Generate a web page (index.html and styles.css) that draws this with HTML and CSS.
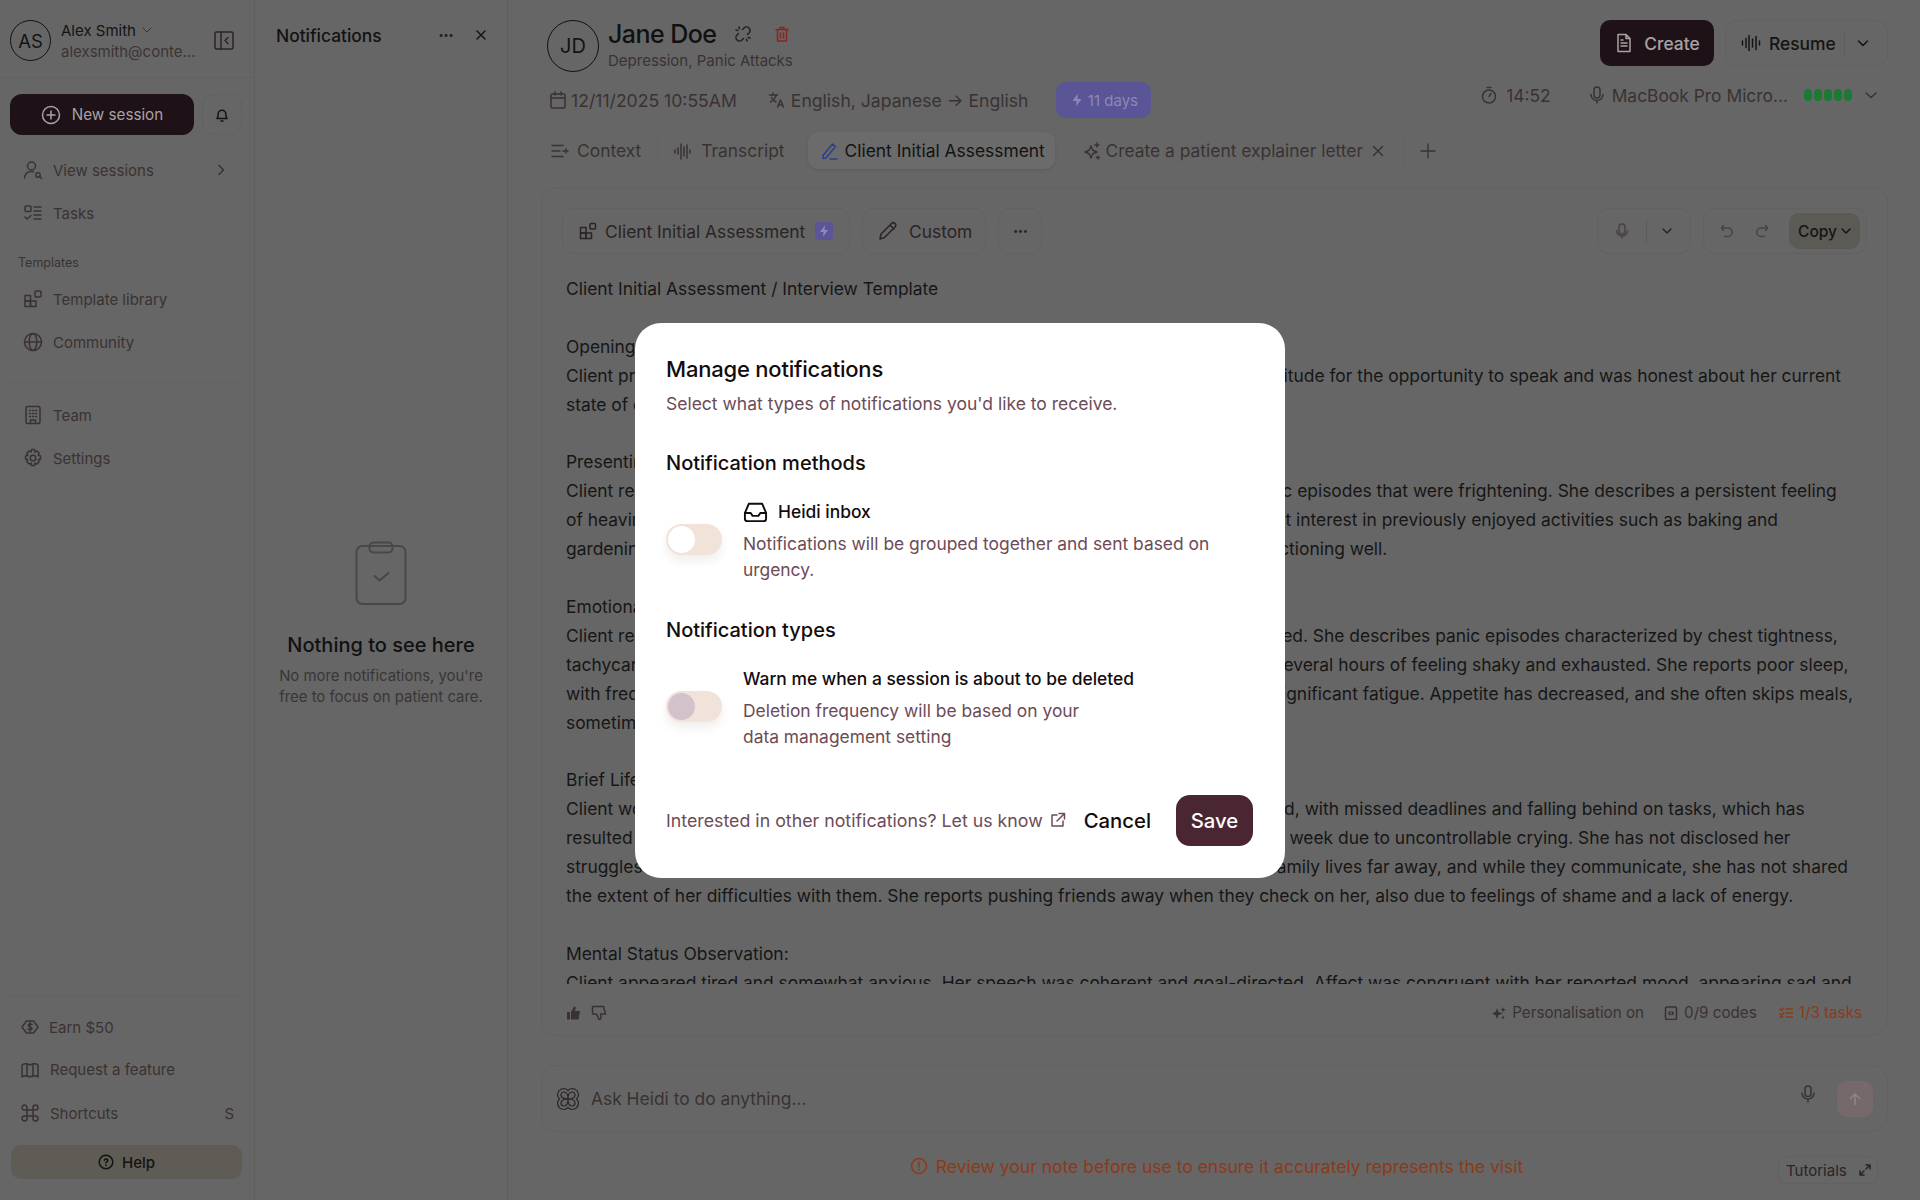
FILE: index.html
```html
<!DOCTYPE html>
<html lang="en">
<head>
<meta charset="utf-8">
<title>Manage notifications</title>
<link rel="stylesheet" href="styles.css">
</head>
<body>
<div class="app">
  <aside class="sidebar">
    <header class="account">
      <div class="avatar avatar-sm">AS</div>
      <div class="account-text">
        <div class="account-name">Alex Smith <svg class="ic-10" viewBox="0 0 10 10"><path d="M1 3l4 4 4-4"/></svg></div>
        <div class="account-mail">alexsmith@conte...</div>
      </div>
      <svg class="ic-20 collapse" viewBox="0 0 20 20"><rect x="1" y="1" width="18" height="17" rx="1.5"/><path d="M7 1v17M14 6.5l-3 3 3 3"/></svg>
    </header>
    <div class="session-row">
      <button class="btn-new"><svg class="ic-20" viewBox="0 0 20 20"><circle cx="10" cy="10" r="8.5"/><path d="M10 6v8M6 10h8"/></svg>New session</button>
      <button class="btn-bell"><svg class="ic-16" viewBox="0 0 16 16"><path d="M3 11.5c1-1 1.2-2 1.2-4.500a3.800 3.800 0 017.600 0c0 2.500.2 3.500 1.200 4.500zM7 14h2"/></svg></button>
    </div>
    <nav class="nav nav-main">
      <a class="nav-item"><svg class="ic-20" viewBox="0 0 20 20"><circle cx="8.500" cy="6" r="4"/><path d="M1.500 18c.5-4 3-6.500 7-6.500 1 0 1.500.1 2 .3"/><circle cx="15" cy="15" r="2.200"/><path d="M17 17l1.500 1.500"/></svg><span>View sessions</span><svg class="ic-12 push" viewBox="0 0 12 12"><path d="M4 1.500L8.500 6 4 10.500"/></svg></a>
      <a class="nav-item"><svg class="ic-20" viewBox="0 0 20 20"><rect x="2" y="3" width="6" height="5.500" rx="1"/><path d="M11 4h7M11 8h7M11 12h7M11 16h7M2 14l2 2 4-3.500"/></svg><span>Tasks</span></a>
    </nav>
    <div class="nav-label">Templates</div>
    <nav class="nav">
      <a class="nav-item"><svg class="ic-20" viewBox="0 0 20 20"><rect x="2" y="6.500" width="5.500" height="5.500"/><rect x="2" y="12" width="5.500" height="5.500"/><rect x="7.500" y="12" width="5.500" height="5.500"/><rect x="12" y="2" width="6" height="6" rx="1"/></svg><span>Template library</span></a>
      <a class="nav-item"><svg class="ic-20" viewBox="0 0 20 20"><circle cx="10" cy="10" r="8.500"/><ellipse cx="10" cy="10" rx="3.800" ry="8.500"/><path d="M1.500 10h17"/></svg><span>Community</span></a>
    </nav>
    <hr class="rule rule-a">
    <nav class="nav">
      <a class="nav-item"><svg class="ic-20" viewBox="0 0 20 20"><rect x="3" y="1.500" width="14" height="17" rx="1.500"/><path d="M6.500 5.500h1M9.500 5.500h1M12.500 5.500h1M6.500 8.500h1M9.500 8.500h1M12.500 8.500h1M6.500 11.500h1M9.500 11.500h1M12.500 11.500h1M7.500 18.500v-3.500h5v3.500"/></svg><span>Team</span></a>
      <a class="nav-item"><svg class="ic-20" viewBox="0 0 20 20"><circle cx="10" cy="10" r="2.800"/><path d="M8.500 1.500h3l.5 2.500 2-1 2.200 2.200-1 2 2.300.8v3l-2.300.8 1 2-2.200 2.200-2-1-.5 2.500h-3l-.5-2.500-2 1-2.200-2.200 1-2-2.300-.8v-3l2.300-.8-1-2L6 3l2 1z"/></svg><span>Settings</span></a>
    </nav>
    <div class="sidebar-fill"></div>
    <hr class="rule">
    <nav class="nav nav-foot">
      <a class="foot-item foot-earn"><svg class="ic-18" viewBox="0 0 18 18"><path d="M5.500 3h7L17 9l-4.500 6h-7L1 9z"/><path d="M11 6.500c-.5-.8-3.800-1-3.800 1 0 1.900 3.800 1 3.800 3 0 1.900-3.400 1.700-4 .5M9 4.500v9"/></svg><span>Earn $50</span></a>
      <a class="foot-item"><svg class="ic-18" viewBox="0 0 18 18"><path d="M1 4c2-1.500 5-1.500 8 0 3-1.500 6-1.500 8 0v12c-2-1.500-5-1.500-8 0-3-1.500-6-1.500-8 0zM6 3v12.500M12 3v12.500"/></svg><span>Request a feature</span></a>
      <a class="foot-item"><svg class="ic-18" viewBox="0 0 18 18"><path d="M6 6h6v6H6zM6 6H4a2.500 2.500 0 112-2.500zM12 6V3.500a2.500 2.500 0 112.500 2.500zM12 12h2.500a2.500 2.500 0 11-2.500 2.500zM6 12v2.500A2.500 2.500 0 113.500 12z"/></svg><span>Shortcuts</span><span class="push key">S</span></a>
    </nav>
    <button class="btn-help"><svg class="ic-16" viewBox="0 0 16 16"><circle cx="8" cy="8" r="6.800"/><path d="M6.300 6.200c.4-1.800 3.500-1.600 3.500.2 0 1.200-1.800 1.300-1.800 2.600M8 11v.5"/></svg>Help</button>
  </aside>

  <section class="panel">
    <header class="panel-head">
      <h2>Notifications</h2>
      <span class="dots">···</span>
      <svg class="ic-12" viewBox="0 0 12 12"><path d="M2 2l8 8M10 2l-8 8"/></svg>
    </header>
    <div class="empty">
      <svg class="clipboard" viewBox="0 0 52 65"><rect x="1.500" y="5" width="49" height="58" rx="6"/><rect x="14.500" y="1.500" width="23" height="10" rx="4"/><path d="M19.500 35l5 4.500 9-7.500"/></svg>
      <h3>Nothing to see here</h3>
      <p>No more notifications, you're<br>free to focus on patient care.</p>
    </div>
  </section>

  <main class="main">
    <header class="top">
      <div class="client">
        <div class="avatar avatar-md">JD</div>
        <div>
          <div class="client-name"><h1>Jane Doe</h1>
            <svg class="ic-18" viewBox="0 0 18 18"><path d="M8.500 4.500L10 3a3.500 3.500 0 015 5l-1.500 1.500M9.500 13.500L8 15a3.500 3.500 0 01-5-5l1.500-1.500M5 2l.5 1.800M2 5l1.800.5M13 16l-.5-1.800M16 13l-1.800-.5"/></svg>
            <svg class="ic-18 red" viewBox="0 0 18 18"><path d="M3 4.500h12M7 4.500V2.500h4v2M4.500 4.500v11.500h9V4.500M7.500 8v5M10.500 8v5"/></svg>
          </div>
          <div class="client-sub">Depression, Panic Attacks</div>
        </div>
      </div>
      <div class="top-actions">
        <button class="btn-create"><svg class="ic-20" viewBox="0 0 20 20"><path d="M4 1.500h8l4 4v13H4zM12 1.500v4h4M7 10h6M7 13h6M7 7h2"/></svg>Create</button>
        <div class="btn-resume"><svg class="ic-20" viewBox="0 0 20 20"><path d="M1.500 8v4M5 5.500v9M8 2.500v15M11.500 6v8M15 3.500v13M18.500 8v4"/></svg><span>Resume</span><i class="sep"></i><svg class="ic-12" viewBox="0 0 12 12"><path d="M1.500 4L6 8.500 10.500 4"/></svg></div>
      </div>
    </header>

    <div class="meta">
      <div class="meta-left">
        <span class="meta-item meta-date"><svg class="ic-18" viewBox="0 0 18 18"><rect x="2" y="3" width="14" height="14" rx="1.500"/><path d="M2 7h14M6 1v3M12 1v3"/></svg>12/11/2025 10:55AM</span>
        <span class="meta-item meta-lang"><svg class="ic-18" viewBox="0 0 18 18"><path d="M1.500 4h8M5 2v2M8 4c-.5 3-2.500 5.500-5.500 7M3.500 6.500c1 2 2.500 3.500 4.500 4.500M9.500 16l3-7 3 7M10.500 14h4"/></svg>English, Japanese → English</span>
        <span class="badge"><svg class="ic-14" viewBox="0 0 14 14"><path class="fill" d="M8 0.500L2.500 8h4L6 13.500 11.500 6h-4z"/></svg>11 days</span>
      </div>
      <div class="meta-right">
        <span class="meta-item meta-timer"><svg class="ic-18" viewBox="0 0 18 18"><circle cx="9" cy="10.500" r="6.500"/><path d="M7 1.500h4M9 10.500l2-3"/></svg>14:52</span>
        <span class="meta-item meta-mic"><svg class="ic-18" viewBox="0 0 18 18"><rect x="6" y="1" width="6" height="11" rx="3"/><path d="M3 8.500a6 6 0 0012 0M9 14.500V17"/></svg>MacBook Pro Micro...</span>
        <span class="levels"><i></i><i></i><i></i><i></i><i></i></span>
        <svg class="ic-12 chev" viewBox="0 0 12 12"><path d="M1 4l5 4.500L11 4"/></svg>
      </div>
    </div>

    <nav class="tabs">
      <a class="tab tab-context"><svg class="ic-18" viewBox="0 0 18 18"><path d="M1 3.500h11M1 9h8M1 14.500h11M12 9h5M15 7v4"/></svg>Context</a>
      <i class="tab-sep"></i>
      <a class="tab tab-transcript"><svg class="ic-18" viewBox="0 0 18 18"><path d="M1 8v3M4 6v6M7 2v15M10 5v9M13 3v13M16 8v3"/></svg>Transcript</a>
      <a class="tab tab-active"><svg class="ic-18 blue" viewBox="0 0 18 18"><path d="M2 13.500L11.500 2l3 2.500L5 16l-3 .5zM9 17h7"/></svg>Client Initial Assessment</a>
      <a class="tab tab-letter"><svg class="ic-18" viewBox="0 0 18 18"><path d="M8 4l1.800 4.200L14 10l-4.200 1.800L8 16l-1.800-4.200L2 10l4.200-1.800zM14 1v4M12 3h4M15 14v3M13.500 15.500h3"/></svg>Create a patient explainer letter<svg class="ic-12 tab-x" viewBox="0 0 12 12"><path d="M1.500 1.500l9 9M10.500 1.500l-9 9"/></svg></a>
      <i class="tab-sep sep-plus"></i>
      <svg class="ic-16 plus" viewBox="0 0 16 16"><path d="M8 1v14M1 8h14"/></svg>
    </nav>

    <section class="card">
      <div class="toolbar">
        <button class="tool tool-template"><svg class="ic-18" viewBox="0 0 18 18"><rect x="1.500" y="5.500" width="5.500" height="5.500"/><rect x="1.500" y="11" width="5.500" height="5.500"/><rect x="7" y="11" width="5.500" height="5.500"/><rect x="11" y="1.500" width="5.500" height="5.500" rx="1"/></svg>Client Initial Assessment<span class="bolt"><svg class="ic-14" viewBox="0 0 14 14"><path class="fill" d="M8 1L3 8h3.500L6 13l5-7H7.500z"/></svg></span></button>
        <button class="tool tool-custom"><svg class="ic-20" viewBox="0 0 20 20"><path d="M2 18l1-5L13.500 2.500a2 2 0 013.500 3.500L6.500 16.500zM12 4l4 4"/></svg>Custom</button>
        <button class="tool tool-more">···</button>
        <div class="tool-right">
          <div class="tool tool-mic"><svg class="ic-16 soft" viewBox="0 0 16 16"><rect x="5" y="1" width="6" height="10" rx="3"/><path d="M2.500 7.500a5.500 5.500 0 0011 0M8 13v2"/></svg><i class="sep"></i><svg class="ic-10" viewBox="0 0 10 10"><path d="M1 3l4 4 4-4"/></svg></div>
          <div class="tool tool-copygroup">
            <svg class="ic-14 soft" viewBox="0 0 14 14"><path d="M3.500 1.500L1.500 4l2 2.500M1.500 4H8a4 4 0 010 8.500H4.500"/></svg>
            <svg class="ic-14 soft" viewBox="0 0 14 14"><path d="M10.500 1.500l2 2.500-2 2.500M12.500 4H6a4 4 0 000 8.500h3.500"/></svg>
            <span class="copy">Copy<svg class="ic-10" viewBox="0 0 10 10"><path d="M1 3l4 4 4-4"/></svg></span>
          </div>
        </div>
      </div>
      <div class="note">Client Initial Assessment / Interview Template<br>
<br>
Opening Statement:<br>
Client presented as tearful but engaged during the interview. She expressed all her gratitude for the opportunity to speak and was honest about her current<br>
state of distress, noting that she has been struggling to cope for several months.<br>
<br>
Presenting Concerns:<br>
Client reports persistent low mood for approximately six months, with some recent panic episodes that were frightening. She describes a persistent feeling<br>
of heaviness and sadness on most days, along with low energy and fatigue, and has lost interest in previously enjoyed activities such as baking and<br>
gardening. She feels overwhelmed at work and at home and also worries about not functioning well.<br>
<br>
Emotional and Physical Symptoms:<br>
Client reports feeling sad, hopeless, and increasingly anxious, usually when overwhelmed. She describes panic episodes characterized by chest tightness,<br>
tachycardia, and a shortness of breath, which often occur weekly and are followed by several hours of feeling shaky and exhausted. She reports poor sleep,<br>
with frequent nighttime awakenings and difficulty returning to sleep, often resulting in significant fatigue. Appetite has decreased, and she often skips meals,<br>
sometimes forgetting to eat for most of the day.<br>
<br>
Brief Life Context:<br>
Client works full-time in an administrative role and she felt her performance has declined, with missed deadlines and falling behind on tasks, which has<br>
resulted in tension with her manager. She has missed several days of work over the last week due to uncontrollable crying. She has not disclosed her<br>
struggles to colleagues and feels increasingly isolated from her support network. Her family lives far away, and while they communicate, she has not shared<br>
the extent of her difficulties with them. She reports pushing friends away when they check on her, also due to feelings of shame and a lack of energy.<br>
<br>
Mental Status Observation:<br>
Client appeared tired and somewhat anxious. Her speech was coherent and goal-directed. Affect was congruent with her reported mood, appearing sad and</div>
      <footer class="card-foot">
        <svg class="ic-16" viewBox="0 0 16 16"><path class="fill" d="M1 7h3v7.500H1zM5 7l3-5.500c1.500 0 2 1 1.500 2.500L9 6h5l-1.500 8.500H5z"/></svg>
        <svg class="ic-16 thumb-down" viewBox="0 0 16 16"><path d="M1.500 1.500h11l2 7.500H9.500l.5 3c0 1.500-1 2.500-2 2.500L5.500 9h-4z"/></svg>
        <span class="foot-gap"></span>
        <span class="stat"><svg class="ic-14" viewBox="0 0 14 14"><path class="fill" d="M5 2l1.500 4L11 7.500 6.500 9 5 13 3.500 9 0 7.500 3.500 6zM11 1l.8 2L14 3.800l-2.200.8L11 6.500l-.8-1.900L8.500 3.800 10.200 3zM11 9.500l.6 1.400 1.400.6-1.400.6-.6 1.400-.6-1.400-1.400-.6 1.400-.6z"/></svg>Personalisation on</span>
        <span class="stat"><svg class="ic-14" viewBox="0 0 14 14"><rect x="1.500" y="1" width="11" height="12.500" rx="1.500"/><path d="M6 6L4.800 7.200 6 8.500M8 6l1.200 1.200L8 8.500"/></svg>0/9 codes</span>
        <span class="stat stat-warn"><svg class="ic-14" viewBox="0 0 14 14"><path d="M1 3l1.500 1.500L4.500 2M1 8l1.500 1.500L4.500 7M7 3h6.500M7 7h6.500M7 11h6.500M1 11h3"/></svg>1/3 tasks</span>
      </footer>
    </section>

    <div class="ask">
      <svg class="ask-logo" viewBox="0 0 26 26"><path d="M9 2.500a6 6 0 014 2 6 6 0 014-2 6.500 6.500 0 016.500 6.500 6 6 0 01-2 4 6 6 0 012 4 6.500 6.500 0 01-6.500 6.500 6 6 0 01-4-2 6 6 0 01-4 2A6.500 6.500 0 012.500 17a6 6 0 012-4 6 6 0 01-2-4A6.500 6.500 0 019 2.500z"/><path d="M13 13C8 13 6 11 6 9a3 3 0 013-3c2 0 4 2 4 7zM13 13c5 0 7-2 7-4a3 3 0 00-3-3c-2 0-4 2-4 7zM13 13c-5 0-7 2-7 4a3 3 0 003 3c2 0 4-2 4-7zM13 13c5 0 7 2 7 4a3 3 0 01-3 3c-2 0-4-2-4-7z"/></svg>
      <span class="ask-text">Ask Heidi to do anything...</span>
      <svg class="ic-18 ask-mic" viewBox="0 0 18 18"><rect x="6" y="1" width="6" height="10.500" rx="3"/><path d="M3 8a6 6 0 0012 0M9 14v3"/></svg>
      <button class="send"><svg class="ic-14" viewBox="0 0 14 14"><path d="M7 12.500V2M2.500 6.500L7 2l4.500 4.500"/></svg></button>
    </div>

    <div class="warning"><svg class="ic-18" viewBox="0 0 18 18"><circle cx="9" cy="9" r="7.500"/><path d="M9 5v5M9 12.500v.5"/></svg>Review your note before use to ensure it accurately represents the visit</div>
    <button class="tutorials">Tutorials<svg class="ic-12" viewBox="0 0 12 12"><path d="M7 1h4v4M11 1L7 5M5 11H1V7M1 11l4-4"/></svg></button>
  </main>
</div>

<div class="backdrop">
  <div class="modal" role="dialog">
    <h2 class="modal-title">Manage notifications</h2>
    <p class="modal-sub">Select what types of notifications you'd like to receive.</p>
    <h3 class="modal-head head-methods">Notification methods</h3>
    <div class="option">
      <span class="toggle"><i></i></span>
      <div class="option-body">
        <div class="option-title"><svg class="inbox" viewBox="0 0 26 22"><path d="M2 12L6 2.500h14L24 12v6a2.500 2.500 0 01-2.500 2.500h-17A2.500 2.500 0 012 18z"/><path d="M2 12h6l2 3h6l2-3h6"/></svg>Heidi inbox</div>
        <p>Notifications will be grouped together and sent based on urgency.</p>
      </div>
    </div>
    <h3 class="modal-head head-types">Notification types</h3>
    <div class="option">
      <span class="toggle toggle-muted"><i></i></span>
      <div class="option-body">
        <div class="option-title title-plain">Warn me when a session is about to be deleted</div>
        <p>Deletion frequency will be based on your<br>data management setting</p>
      </div>
    </div>
    <footer class="modal-foot">
      <a class="modal-link">Interested in other notifications? Let us know<svg class="ic-16" viewBox="0 0 16 16"><path d="M7 3H2v11h11V9M9 1.500h5.500V7M14.500 1.500L7 9"/></svg></a>
      <button class="btn-cancel">Cancel</button>
      <button class="btn-save">Save</button>
    </footer>
  </div>
</div>
</body>
</html>
```
FILE: styles.css
```css
* { box-sizing: border-box; }
html, body { margin: 0; height: 100%; }
body { font-family: Inter, "Liberation Sans", sans-serif; background: #666; color: #151515; overflow: hidden; }
h1, h2, h3, p { margin: 0; font-weight: 500; }
button { font: inherit; color: inherit; background: none; border: 0; padding: 0; }
svg { fill: none; stroke: currentColor; stroke-width: 1.5; stroke-linecap: round; stroke-linejoin: round; flex: none; display: block; }
svg .fill { fill: currentColor; stroke: none; }
.ic-10 { width: 10px; height: 10px; }
.ic-12 { width: 12px; height: 12px; }
.ic-14 { width: 14px; height: 14px; }
.ic-16 { width: 16px; height: 16px; }
.ic-18 { width: 18px; height: 18px; }
.ic-20 { width: 20px; height: 20px; }
.push { margin-left: auto; }

.app { display: flex; height: 1200px; }

/* Sidebar */
.sidebar { width: 255px; flex: none; border-right: 1px solid #5f5f5b; display: flex; flex-direction: column; color: #3a3232; }
.account { height: 78px; flex: none; display: flex; align-items: center; padding: 4px 20px 0 10px; border-bottom: 1px solid #61615e; }
.avatar { border: 1.5px solid #111; border-radius: 50%; display: flex; align-items: center; justify-content: center; color: #141414; flex: none; }
.avatar-sm { width: 41px; height: 41px; font-size: 18.500px; }
.avatar-md { width: 52px; height: 52px; font-size: 20px; }
.account-text { margin-left: 10px; width: 143px; font-size: 15px; line-height: 21px; }
.account-name { display: flex; align-items: center; gap: 6px; color: #141414; }
.account-name svg { color: #3a3232; stroke-width: 1; }
.account-mail { color: #3c3434; white-space: nowrap; }
.collapse { color: #2c2426; margin-left: auto; }
.session-row { display: flex; gap: 8px; padding: 16px 12px 0 10px; }
.btn-new { width: 184px; height: 41px; border-radius: 12px; background: #1e1218; color: #a9a2a4; display: flex; align-items: center; justify-content: center; gap: 11px; font-size: 15.200px; }
.btn-bell { width: 40px; height: 41px; border: 1px solid #616160; border-radius: 12px; display: flex; align-items: center; justify-content: center; color: #141414; }
.nav { display: flex; flex-direction: column; gap: 3px; padding: 0 12px; }
.nav-main { margin-top: 15px; }
.nav-item { height: 40px; display: flex; align-items: center; gap: 10px; padding: 0 15px 0 11px; font-size: 15px; }
.nav-item .ic-12 { color: #3a3232; }
.nav-label { font-size: 12.500px; color: #3a3232; padding: 22px 0 0 18px; line-height: 16px; height: 46px; }
.rule { border: 0; border-top: 1px solid #61615e; margin: 0 10px; }
.rule-a { margin-top: 20px; margin-bottom: 12px; }
.sidebar-fill { flex: 1; }
.nav-foot { gap: 3px; padding: 10px 12px 0 10px; }
.foot-item { height: 40.500px; display: flex; align-items: center; gap: 11px; font-size: 15px; padding: 0 0 0 11px; }
.foot-earn { gap: 10px; margin-bottom: -1px; }
.key { padding-right: 8px; }
.btn-help { margin: 11.500px 12px 21px 11px; height: 34px; border-radius: 10px; background: #5f5b55; color: #131313; display: flex; align-items: center; justify-content: center; gap: 8px; font-size: 15px; font-weight: 500; }

/* Notifications panel */
.panel { width: 253px; flex: none; border-right: 1px solid #5f5f5b; display: flex; flex-direction: column; }
.panel-head { height: 70px; display: flex; align-items: center; padding: 0 20px 0 21px; }
.panel-head h2 { font-size: 17.400px; color: #121212; flex: 1; }
.dots { font-size: 18px; font-weight: 700; color: #222; margin-right: 22px; letter-spacing: -1px; }
.empty { display: flex; flex-direction: column; align-items: center; padding-top: 471px; }
.clipboard { width: 52px; height: 65px; color: #484848; stroke-width: 2; }
.empty h3 { font-size: 20px; color: #111; margin-top: 26px; line-height: 26px; }
.empty p { font-size: 14.900px; line-height: 21px; color: #3a3535; text-align: center; margin-top: 8px; font-weight: 400; white-space: nowrap; }

/* Main */
.main { flex: 1; min-width: 0; position: relative; padding: 20px 32px 0 33px; display: flex; flex-direction: column; }
.top { display: flex; justify-content: space-between; height: 52px; padding: 0 0 0 6px; }
.client { display: flex; gap: 9px; }
.client-name { display: flex; align-items: center; gap: 18px; height: 28px; }
.client-name h1 { font-size: 25px; color: #111; letter-spacing: -.55px; }
.client-name .ic-18 { color: #222; }
.client-name .red { color: #8a2424; margin-left: 3px; }
.client-sub { font-size: 15px; line-height: 22px; color: #3a3232; margin-top: 2px; }
.top-actions { display: flex; gap: 11px; align-items: flex-start; }
.btn-create { width: 114px; height: 46px; border-radius: 10px; background: #1e1218; color: #a9a2a4; display: flex; align-items: center; justify-content: center; gap: 10px; font-size: 17.400px; font-weight: 500; }
.btn-resume { width: 163px; height: 46px; border: 1px solid #616160; border-radius: 12px; display: flex; align-items: center; padding: 0 15px; gap: 8px; font-size: 17.400px; font-weight: 500; color: #141414; }
.sep { width: 1px; height: 24px; background: #5c5c5a; display: block; }
.btn-resume .ic-12 { margin-left: 4px; }
.meta { height: 36px; margin-top: 10px; display: flex; justify-content: space-between; font-size: 17.600px; color: #3a3232; padding-left: 8px; }
.meta-left, .meta-right { display: flex; align-items: center; }
.meta-right { height: 26px; padding-right: 11px; font-size: 17.400px; }
.meta-item { display: flex; align-items: center; gap: 4px; white-space: nowrap; }
.meta-lang { margin-left: 31px; gap: 5px; }
.badge { margin-left: 28px; width: 95px; height: 36px; border-radius: 10px; background: #5a5596; color: #8c88b8; display: flex; align-items: center; justify-content: center; gap: 4px; font-size: 15px; }
.meta-timer { gap: 8px; }
.meta-mic { margin-left: 37px; gap: 6px; }
.levels { display: flex; gap: 2px; margin-left: 16px; }
.levels i { width: 8px; height: 12px; border-radius: 4px; background: #1c7a35; }
.chev { margin-left: 13px; color: #3a3232; }
.tabs { height: 37px; margin-top: 14px; display: flex; align-items: center; font-size: 17.400px; color: #3a3232; padding-left: 10px; }
.tab { display: flex; align-items: center; gap: 6px; white-space: nowrap; }
.tab-context { gap: 8px; }
.tab-sep { width: 1px; height: 26px; background: #61615f; margin: 0 16px; }
.tab-transcript { margin-right: 23px; gap: 9px; }
.tab-active { height: 37px; width: 247px; border-radius: 10px; background: #6b6b6b; box-shadow: 0 1px 3px rgba(0,0,0,.1); color: #131313; padding-left: 13px; gap: 6px; }
.blue { color: #2b3d8c; }
.tab-letter { margin-left: 28px; gap: 5px; }
.tab-x { margin-left: 4px; }
.sep-plus { margin: 0 16px 0 19px; }
.plus { stroke-width: 1.300; }
.card { height: 849px; margin-top: 18px; border: 1px solid #616160; border-radius: 16px; display: flex; flex-direction: column; padding: 20px 20px 0 20px; }
.toolbar { height: 46px; display: flex; gap: 12px; flex: none; }
.tool { height: 46px; border: 1px solid #616160; border-radius: 12px; display: flex; align-items: center; color: #2a2425; font-size: 17.400px; }
.tool-template { width: 288px; padding-left: 16px; gap: 8px; }
.bolt { width: 18px; height: 18px; border-radius: 4px; background: #5a5596; color: #8c88b8; display: flex; align-items: center; justify-content: center; margin-left: 2px; }
.tool-custom { width: 124px; padding-left: 15px; gap: 11px; }
.tool-more { width: 44px; justify-content: center; font-weight: 700; letter-spacing: -1px; }
.tool-right { margin-left: auto; display: flex; gap: 12px; }
.tool-mic { width: 94px; padding: 0 18px 0 16px; justify-content: space-between; }
.soft { color: #4a4244; }
.tool-copygroup { width: 164px; padding: 0 6px 0 16px; gap: 21px; }
.copy { width: 76px; height: 36px; border-radius: 10px; background: #5c5a55; display: flex; align-items: center; justify-content: center; gap: 4px; font-size: 15.500px; font-weight: 500; color: #141414; margin-left: -1px; }
.note { margin: 21px -20px 0 4px; height: 709px; overflow: hidden; font-size: 17.400px; line-height: 28.900px; white-space: nowrap; color: #161616; flex: none; }
.card-foot { display: flex; align-items: center; height: 25px; margin-top: 16px; font-size: 15.200px; color: #3a3232; gap: 7px; padding: 0 5px 0 4px; }
.thumb-down { margin-left: 2px; }
.foot-gap { flex: 1; }
.stat { display: flex; align-items: center; gap: 6px; margin-left: 13px; }
.stat-warn { color: #8c3a18; margin-left: 15px; }
.ask { height: 67px; margin-top: 29px; border: 1px solid #616160; border-radius: 16px; display: flex; align-items: center; padding: 0 14px 0 13px; flex: none; }
.ask-logo { width: 26px; height: 26px; color: #2c2426; stroke-width: 1.200; }
.ask-text { font-size: 17.400px; margin-left: 10px; color: #3a3232; flex: 1; }
.ask-mic { color: #3a3232; margin: -10px 20px 0 0; }
.send { width: 36px; height: 36px; border-radius: 10px; background: #75696c; color: #8f8689; display: flex; align-items: center; justify-content: center; }
.warning { margin-top: 21px; display: flex; align-items: center; justify-content: center; gap: 8px; font-size: 17.500px; color: #8c3a18; height: 26px; padding-left: 4px; }
.tutorials { position: absolute; right: 42px; bottom: 16px; width: 100px; height: 28px; border: 1px solid #616160; border-radius: 8px; display: flex; align-items: center; padding-left: 7px; gap: 12px; font-size: 15px; color: #2a2425; }

/* Modal */
.backdrop { position: fixed; inset: 0; display: flex; align-items: center; justify-content: center; }
.modal { width: 650px; height: 555px; background: #fff; border-radius: 26px; padding: 31px 32px 32px 31px; display: flex; flex-direction: column; color: #120c0e; }
.modal-title { font-size: 22px; line-height: 30px; letter-spacing: -.2px; }
.modal-sub { font-size: 17.500px; line-height: 26px; color: #6d4b57; font-weight: 400; margin-top: 7px; }
.modal-head { font-size: 20px; line-height: 28px; }
.head-methods { margin-top: 32px; }
.head-types { margin-top: 33px; }
.option { display: flex; align-items: center; gap: 21px; margin-top: 23px; }
.toggle { width: 56px; height: 31px; border-radius: 16px; background: #f1e3da; flex: none; padding: 2px; box-shadow: 0 6px 10px rgba(80,50,40,.08); margin-top: -4px; }
.toggle i { display: block; width: 27px; height: 27px; border-radius: 50%; background: #fff; }
.toggle-muted i { background: #d2c2cb; }
.option-body { flex: 1; }
.option-title { display: flex; align-items: center; gap: 10px; font-size: 17.400px; font-weight: 500; line-height: 24px; }
.inbox { width: 25px; height: 22px; stroke-width: 2; }
.title-plain { white-space: nowrap; }
.option-body p { font-size: 17.400px; line-height: 26px; color: #6d4b57; font-weight: 400; margin-top: 7px; }
.modal-foot { margin-top: auto; display: flex; align-items: center; }
.modal-link { font-size: 17.800px; color: #6d4b57; display: flex; align-items: center; gap: 7px; white-space: nowrap; }
.btn-cancel { margin-left: auto; font-size: 20.300px; font-weight: 500; color: #120c0e; }
.btn-save { margin-left: 25px; width: 77px; height: 51px; border-radius: 14px; background: #4a2632; color: #fff; font-size: 20.300px; font-weight: 500; }
```
